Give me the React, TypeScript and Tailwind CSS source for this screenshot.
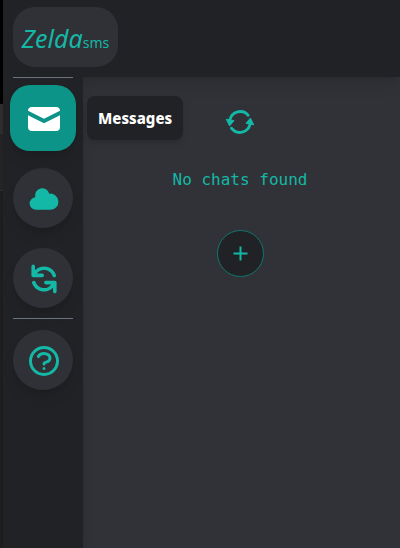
import type { ReactNode } from "react";
import { HiMail, HiCloud, HiRefresh, HiOutlineQuestionMarkCircle } from "react-icons/hi";

function SideButton({ label, active, children }: { label: string; active?: boolean; children: ReactNode }) {
  return (
    <button
      type="button"
      aria-label={label}
      className={
        "flex shrink-0 items-center justify-center pt-px pl-px shadow-lg " +
        (active
          ? "-mx-1 size-[66px] rounded-[20px] bg-[#0d9488] text-white"
          : "size-[60px] rounded-full bg-[#303136] text-[#14b8a6]")
      }
    >
      {children}
    </button>
  );
}

function SyncIcon() {
  return (
    <svg width="30" height="30" viewBox="0 0 30 30" fill="none" aria-hidden="true">
      <g stroke="currentColor" strokeWidth="2.8" strokeLinecap="round">
        <path d="M4.9 13A10.5 10.5 0 0 1 23.2 8.3" />
        <path d="M25.1 17A10.5 10.5 0 0 1 6.4 21.2" />
      </g>
      <g fill="currentColor" stroke="currentColor" strokeWidth="1" strokeLinejoin="round">
        <path d="M1.3 12.2 9 13.6 4.6 18.9Z" />
        <path d="M28.7 17.8 21 16.4 25.4 11.1Z" />
      </g>
    </svg>
  );
}

function PlusIcon() {
  return (
    <svg width="15" height="15" viewBox="0 0 15 15" stroke="currentColor" strokeWidth="2" aria-hidden="true">
      <path d="M7.5 0.5v14M0.5 7.5h14" />
    </svg>
  );
}

export default function App() {
  return (
    <div className="flex min-h-screen bg-[#313237] font-['Noto_Sans',sans-serif]">
      <div className="flex w-[3px] shrink-0 flex-col bg-[#1f1f1f]">
        <div className="h-[104px] bg-black" />
        <div className="h-[30px] bg-[#303030]" />
        <div className="h-[57px] border-b border-[#303030] bg-[#262626]" />
      </div>
      <div className="flex grow flex-col">
        <header className="z-10 flex h-[77px] bg-[#202225] px-[10px] pt-[7px] shadow-lg">
          <h1 className="flex h-[60px] w-[105px] items-center justify-center rounded-[22px] bg-[#303136] pt-1 text-[#14b8a6]">
            <span>
              <span className="text-[25px] italic">Zelda</span>
              <span className="text-[14px]">sms</span>
            </span>
          </h1>
        </header>
        <div className="flex grow">
          <nav className="z-20 flex w-20 shrink-0 flex-col items-center bg-[#202225] shadow-lg">
            <hr className="w-[60px] border-[#6b7280]" />
            <div className="relative mt-[7px] flex">
              <SideButton label="Messages" active>
                <HiMail size={40} />
              </SideButton>
              <span className="absolute top-[11px] left-[73px] rounded-lg bg-[#202225] px-[11px] py-3 text-[15px] leading-5 font-extrabold text-white shadow-md">
                Messages
              </span>
            </div>
            <div className="mt-[17px] flex flex-col gap-5">
              <SideButton label="Cloud"><HiCloud size={36} /></SideButton>
              <SideButton label="Refresh"><HiRefresh size={36} /></SideButton>
            </div>
            <hr className="mt-[10px] mb-[11px] w-[60px] border-[#6b7280]" />
            <SideButton label="Help"><HiOutlineQuestionMarkCircle size={36} /></SideButton>
          </nav>
          <main className="flex grow flex-col items-center pt-[30px] pr-[3px] text-[#14b8a6]">
            <button type="button" aria-label="Reload chats"><SyncIcon /></button>
            <p className="mt-[31px] font-['DejaVu_Sans_Mono',monospace] text-base">No chats found</p>
            <button
              type="button"
              aria-label="New chat"
              className="mt-[38px] flex size-[47px] items-center justify-center rounded-full border border-[#0f766e] bg-[#202225]"
            >
              <PlusIcon />
            </button>
          </main>
        </div>
      </div>
    </div>
  );
}
